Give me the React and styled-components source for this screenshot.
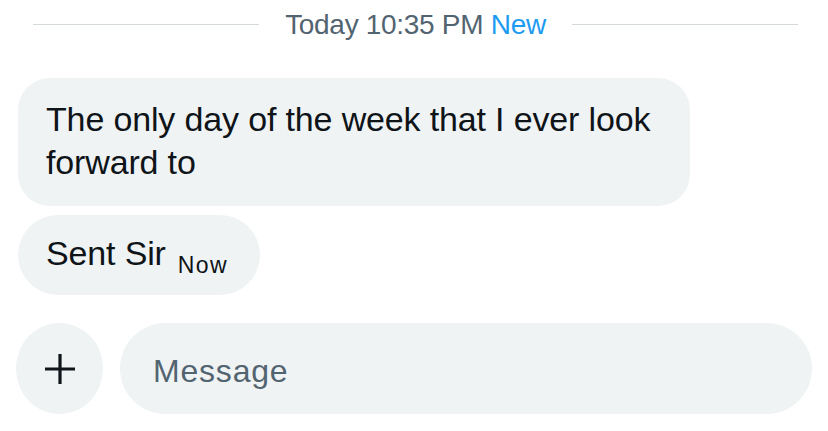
import React from "react";
import styled, { createGlobalStyle } from "styled-components";

const GlobalStyle = createGlobalStyle`
  body {
    margin: 0;
    background: #ffffff;
    font-family: "Liberation Sans", Arial, sans-serif;
  }
`;

const Page = styled.div`
  width: 828px;
  height: 431px;
  display: flex;
  flex-direction: column;
  overflow: hidden;
`;

const Divider = styled.div`
  display: flex;
  align-items: flex-start;
  height: 48px;
  padding: 0 30px 0 33px;
`;

const Line = styled.div`
  flex: 1;
  height: 1px;
  margin-top: 24px;
  background: #d4d9dc;
`;

const Stamp = styled.div`
  margin: 9px 26px 0;
  font-size: 28px;
  line-height: 32px;
  letter-spacing: -0.3px;
  color: #536471;
  white-space: nowrap;
`;

const NewTag = styled.span`
  color: #1d9bf0;
`;

const Thread = styled.div`
  display: flex;
  flex-direction: column;
  align-items: flex-start;
  gap: 9px;
  padding: 30px 0 0 18px;
`;

const Bubble = styled.div`
  background: #eff3f4;
  color: #0f1419;
  border-radius: ${(p) => p.$radius}px;
  padding: ${(p) => p.$pad};
  width: ${(p) => (p.$width ? `${p.$width}px` : "auto")};
  box-sizing: border-box;
  font-size: 34px;
  line-height: 43px;
  letter-spacing: -0.15px;
`;

const Time = styled.span`
  font-size: 23px;
  line-height: 1;
  letter-spacing: 1.4px;
  margin-left: 12px;
  position: relative;
  top: 8px;
`;

const Composer = styled.div`
  display: flex;
  align-items: center;
  gap: 17px;
  padding: 28px 16px 0 16px;
`;

const PlusButton = styled.button`
  width: 87px;
  height: 91px;
  flex: none;
  border: none;
  border-radius: 50%;
  background: #eff3f4;
  display: flex;
  align-items: center;
  justify-content: center;
  padding: 0;
`;

const Input = styled.div`
  flex: 1;
  height: 91px;
  border-radius: 46px;
  background: #eff3f4;
  display: flex;
  align-items: center;
  padding: 5px 0 0 33px;
  box-sizing: border-box;
  font-size: 32px;
  letter-spacing: 0.8px;
  color: #536471;
`;

export default function App() {
  return (
    <>
      <GlobalStyle />
      <Page>
        <Divider>
          <Line />
          <Stamp>
            Today 10:35 PM <NewTag>New</NewTag>
          </Stamp>
          <Line />
        </Divider>
        <Thread>
          <Bubble $radius={32} $pad="20px 28px 22px 28px" $width={672}>
            The only day of the week that I ever look forward to
          </Bubble>
          <Bubble $radius={40} $pad="17px 32px 20px 28px">
            Sent Sir
            <Time>Now</Time>
          </Bubble>
        </Thread>
        <Composer>
          <PlusButton aria-label="Add">
            <svg width="34" height="34" viewBox="0 0 34 34">
              <path
                d="M17 2v30M2 17h30"
                stroke="#0f1419"
                strokeWidth="3.2"
                fill="none"
              />
            </svg>
          </PlusButton>
          <Input>Message</Input>
        </Composer>
      </Page>
    </>
  );
}
